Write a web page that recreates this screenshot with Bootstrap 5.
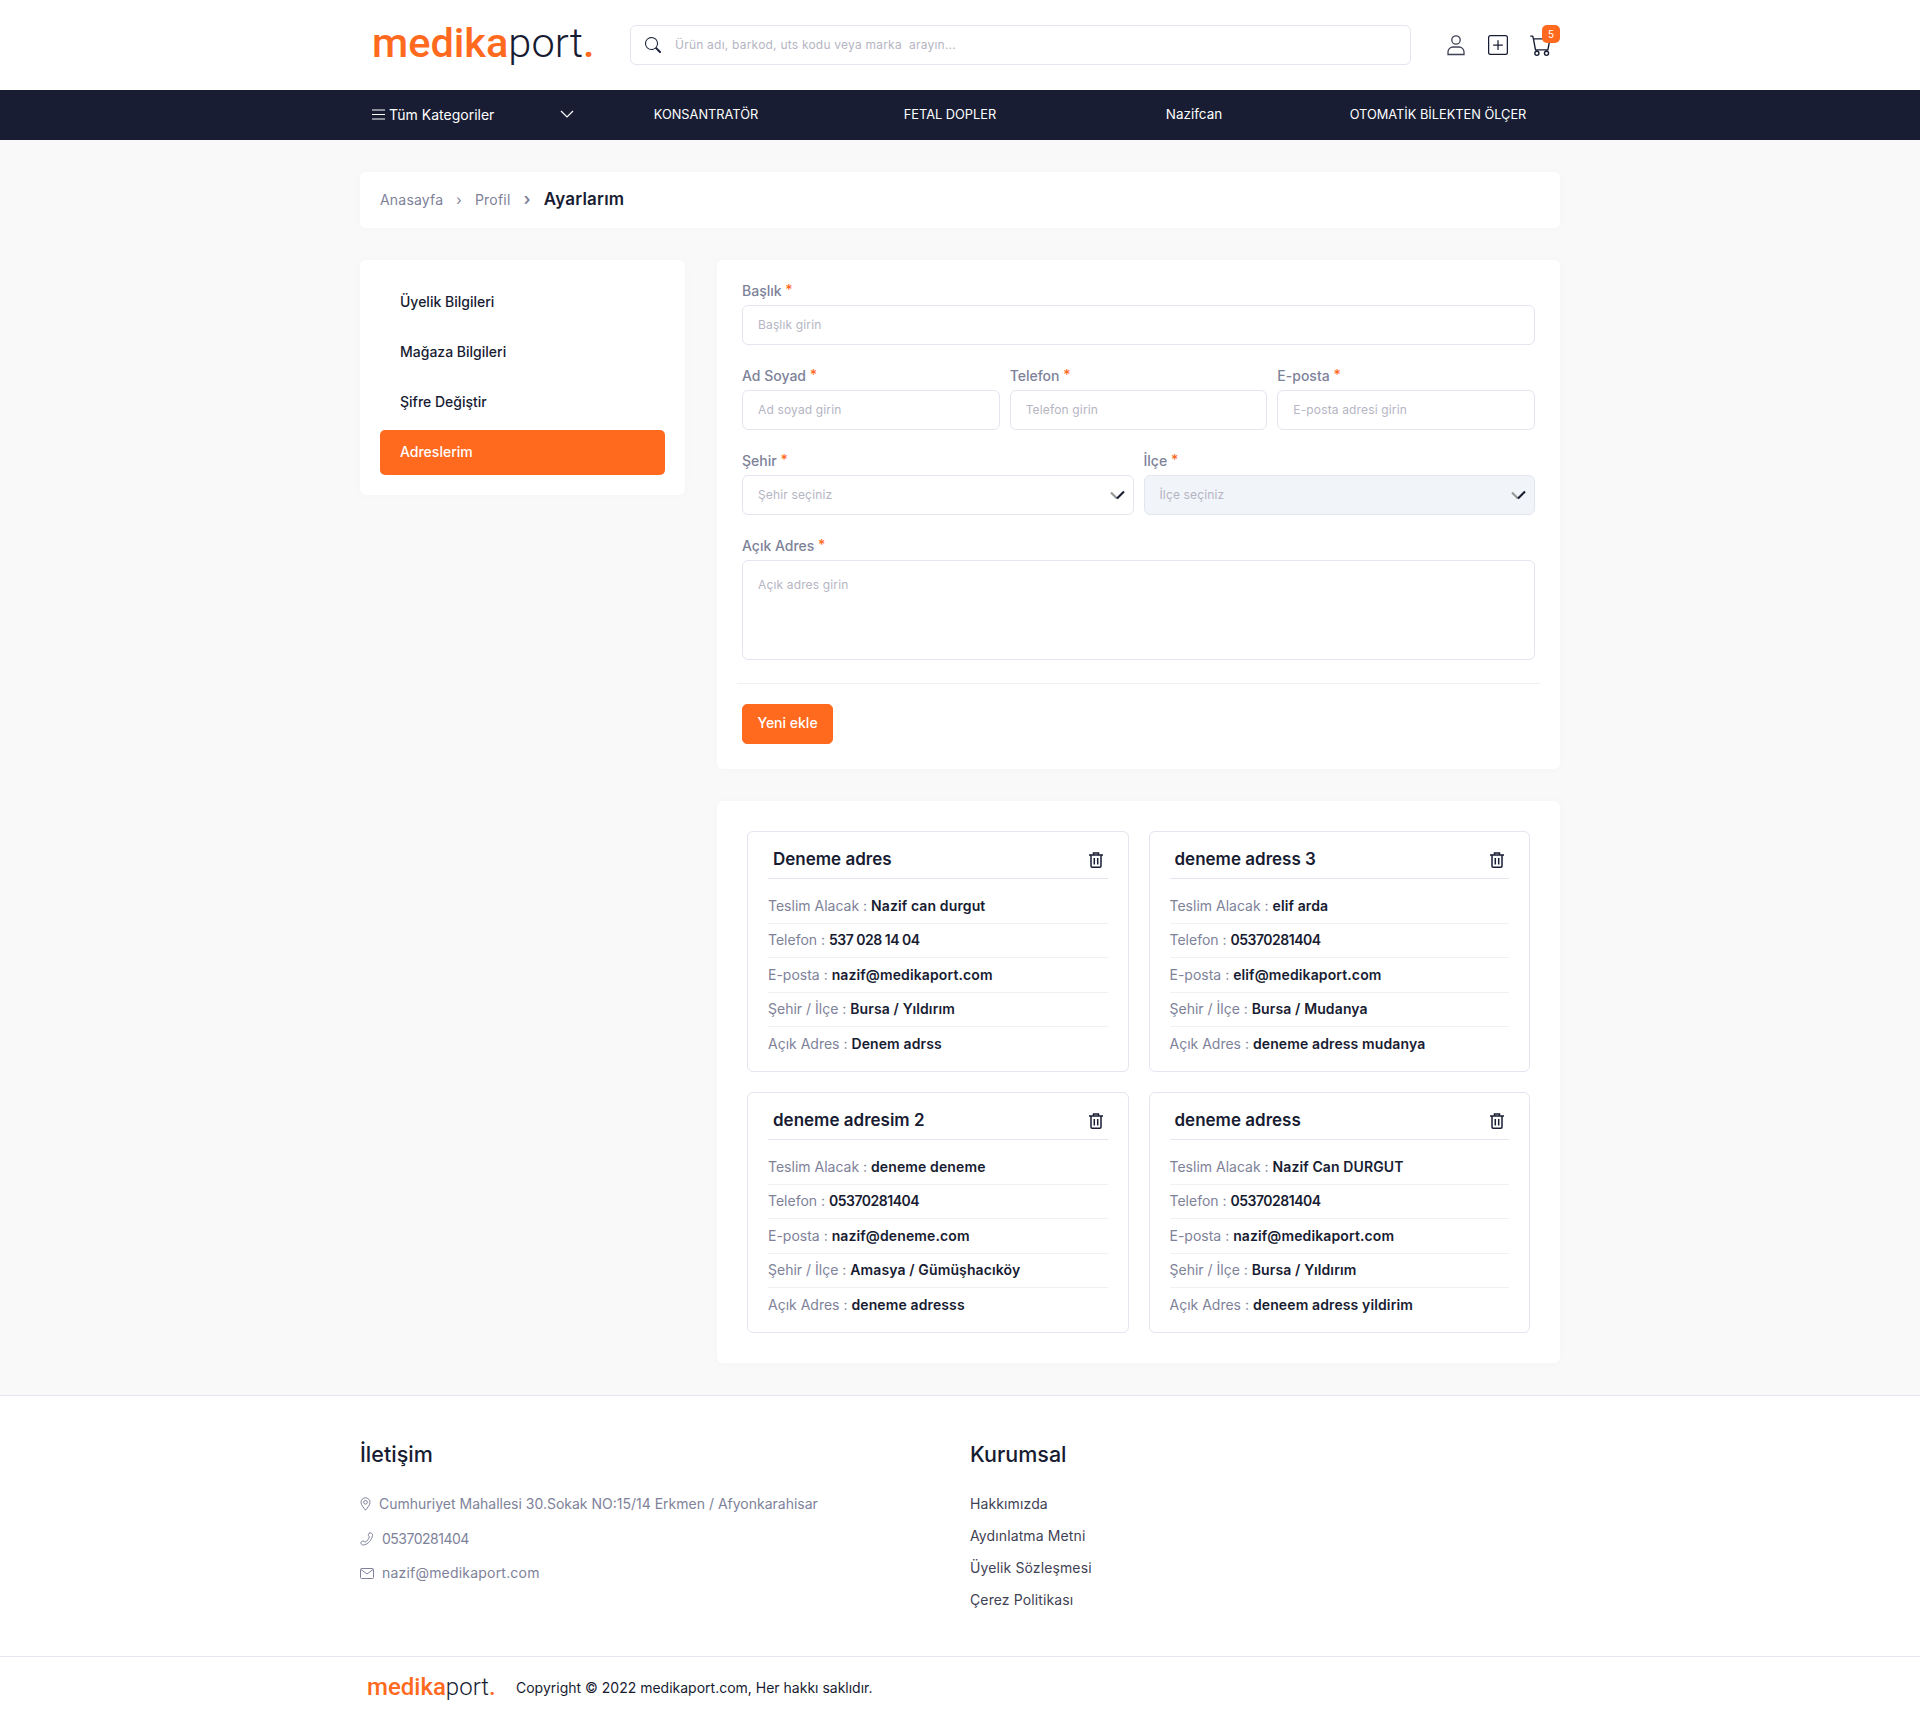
<!DOCTYPE html>
<html lang="tr">
<head>
    <meta charset="UTF-8" />
    <meta name="viewport" content="width=device-width, initial-scale=1.0"/>
    <title>Ayarlarım</title>
    <link href="https://cdn.jsdelivr.net/npm/bootstrap@5.3.1/dist/css/bootstrap.min.css" rel="stylesheet"/>
    <style>
        body { font-family: Inter, "Noto Sans", sans-serif; font-size: 14px; background: #f9f9f9; color: #181c32; }
        a { text-decoration: none; }
        .wrap { width: 1200px; margin: 0 auto; }
        .logo { font-family: Roboto, "Liberation Sans", sans-serif; font-weight: 300; color: #181c32; line-height: 1; }
        .logo b { color: #ff6a1f; font-weight: 500; }
        .logo i { color: #ff6a1f; font-style: normal; font-weight: 500; }
        .logo-big { font-size: 41.500px; margin-left: 12px; width: 258px; padding-bottom: 4px; }
        .logo-small { font-size: 24px; margin-left: 7px; width: 149px; }
        .top-head { height: 90px; background: #fff; }
        .search-box { width: 781px; height: 40px; border: 1px solid #e4e6ef; border-radius: 6px; padding-left: 14px; gap: 12px; }
        .search-box input { border: 0; outline: 0; flex: 1; font-size: 12px; color: #181c32; letter-spacing: .22px; }
        .search-box input::placeholder { color: #b5b5c3; }
        .head-icons { position: relative; margin-left: 35px; gap: 22px; }
        .cart-count { position: absolute; top: -9px; right: -8px; width: 18px; height: 18px; border-radius: 5px; background: #ff6a1f; color: #fff; font-size: 10px; }
        .main-nav { height: 50px; background: #181d33; }
        .main-nav .wrap { padding-bottom: 2px; }
        .main-nav a { color: #fff; font-size: 13.500px; }
        .main-nav a.caps { font-size: 12.800px; }
        .cat-drop { width: 224px; padding: 0 10px 0 12px; color: #fff; font-size: 14px; }
        .nav-cell { width: 244px; text-align: center; }
        .white-box { background: #fff; border-radius: 6px; box-shadow: 0 0 10px rgba(0, 0, 0, .025); }
        .crumb-box { height: 56px; margin-top: 32px; margin-bottom: 32px; padding: 0 20px 2px; }
        .crumb-box .breadcrumb { --bs-breadcrumb-divider: '›'; --bs-breadcrumb-item-padding-x: 13px; --bs-breadcrumb-margin-bottom: 0; letter-spacing: .2px; }
        .crumb-box a, .crumb-box .breadcrumb-item::before { color: #7e8299; }
        .crumb-box .breadcrumb-item.active { color: #181c32; font-size: 17px; font-weight: 600; line-height: 21px; }
        .side-col { width: 325px; flex: none; }
        .main-col { width: 843px; flex: none; margin-left: 32px; }
        .side-box { padding: 20px; }
        .side-link { display: flex; align-items: center; height: 45px; padding: 0 0 2px 20px; margin-bottom: 5px; border-radius: 5px; color: #181c32; font-weight: 500; }
        .side-link:last-child { margin-bottom: 0; }
        .side-link.on { background: #ff6a1f; color: #fff; }
        .form-box { padding: 20px 25px 25px; margin-bottom: 32px; }
        .fld-row { --bs-gutter-x: 10px; }
        .fld { margin-bottom: 20px; }
        .fld label { display: block; height: 25px; line-height: 20px; color: #7e8299; font-weight: 500; font-size: 14px; }
        .fld label span { color: #ff6a1f; vertical-align: 1px; }
        .fld .form-control, .fld .form-select { height: 40px; border-color: #e4e6ef; border-radius: 6px; font-size: 12px; padding: 0 15px 2px; box-shadow: none; letter-spacing: .15px; }
        .fld .form-control::placeholder { color: #b5b5c3; }
        .fld .form-select { padding-bottom: 0; color: #b5b5c3; background-position: right 6px center; background-size: 18px 18px; background-image: url("data:image/svg+xml,%3csvg xmlns='http://www.w3.org/2000/svg' viewBox='0 0 18 18'%3e%3cpath fill='none' stroke='%23999' stroke-width='2.2' d='M2 6.500l6 6'/%3e%3cpath fill='none' stroke='%23181d33' stroke-width='2.2' d='M8 12.500l7-7'/%3e%3c/svg%3e"); }
        .fld .form-select:disabled { background-color: #f1f4f8; }
        .fld textarea.form-control { height: 100px; padding-top: 15px; resize: none; }
        .form-line { margin: 23px -5px 20px; border-top: 1px solid #f1f1f4; height: 0; }
        .fld-last { margin-bottom: 0; }
        .add-btn { --bs-btn-bg: #ff6a1f; --bs-btn-border-color: #ff6a1f; --bs-btn-hover-bg: #f05c12; --bs-btn-hover-border-color: #f05c12; --bs-btn-color: #fff; --bs-btn-hover-color: #fff; display: block; width: 91px; height: 40px; padding: 0 0 3px; font-size: 14px; font-weight: 500; border-radius: 5px; }
        .addr-box { padding: 30px; }
        .addr-grid { display: grid; grid-template-columns: 1fr 1fr; gap: 20px; }
        .addr-item { height: 241px; padding: 0 20px; border: 1px solid #e4e6ef; border-radius: 6px; }
        .addr-head { height: 47px; padding: 15px 5px 0 5px; border-bottom: 1px solid #e4e6ef; }
        .addr-head h6 { font-size: 17px; font-weight: 600; line-height: 24px; margin: 0; color: #181c32; }
        .addr-head svg { margin-top: 5px; }
        .addr-rows { margin: 10px 0 0; padding: 0; list-style: none; }
        .addr-rows li { padding: 5.750px 0 6.750px; line-height: 21px; border-bottom: 1px solid #f1f1f4; color: #7e8299; }
        .addr-rows li:last-child { border-bottom: 0; }
        .addr-rows b { font-weight: 600; color: #181c32; letter-spacing: .12px; }
        .addr-rows b.tel-val, .tel-val { letter-spacing: -.5px; }
        .site-foot { margin-top: 32px; background: #fff; border-top: 1px solid #e4e6ef; }
        .foot-main { height: 260px; padding-top: 43px; }
        .foot-col { width: 610px; flex: none; }
        .foot-col h5 { font-size: 21.500px; font-weight: 500; line-height: 30px; margin-bottom: 19px; color: #181c32; }
        .foot-infos { margin-top: -1px; }
        .foot-info { color: #7e8299; height: 34.500px; line-height: 32px; }
        .mail-val { letter-spacing: .2px; }
        .foot-link { display: block; height: 32px; line-height: 32px; color: #3f4254; letter-spacing: .12px; }
        .foot-copy { height: 61px; border-top: 1px solid #e4e6ef; }
        .copy-text { color: #181c32; }
    </style>
</head>
<body>

<header class="top-head d-flex align-items-center">
    <div class="wrap d-flex align-items-center">
        <a href="#" class="logo logo-big"><b>medika</b>port<i>.</i></a>
        <div class="search-box d-flex align-items-center">
            <svg width="16" height="16" viewBox="0 0 16 16" fill="#181d33"><path d="M11.742 10.344a6.5 6.5 0 1 0-1.397 1.398h-.001c.03.04.062.078.098.115l3.85 3.85a1 1 0 0 0 1.415-1.414l-3.85-3.85a1.007 1.007 0 0 0-.115-.1zM12 6.5a5.5 5.5 0 1 1-11 0 5.5 5.5 0 0 1 11 0z"/></svg>
            <input type="text" placeholder="Ürün adı, barkod, uts kodu veya marka  arayın..." />
        </div>
        <div class="head-icons d-flex align-items-center">
            <svg width="20" height="22" viewBox="0 0 20 22" fill="none" stroke="#3f4254" stroke-width="1.3"><circle cx="10" cy="6" r="4.2"/><path d="M2 20.5v-2.5c0-3 2.5-5 5-5h6c2.5 0 5 2 5 5v2.5z"/></svg>
            <svg width="20" height="20" viewBox="0 0 16 16" fill="#181d33"><path d="M14 1a1 1 0 0 1 1 1v12a1 1 0 0 1-1 1H2a1 1 0 0 1-1-1V2a1 1 0 0 1 1-1h12zM2 0a2 2 0 0 0-2 2v12a2 2 0 0 0 2 2h12a2 2 0 0 0 2-2V2a2 2 0 0 0-2-2H2z"/><path d="M8 4a.5.5 0 0 1 .5.5v3h3a.5.5 0 0 1 0 1h-3v3a.5.5 0 0 1-1 0v-3h-3a.5.5 0 0 1 0-1h3v-3A.5.5 0 0 1 8 4z"/></svg>
            <svg width="22" height="22" viewBox="0 0 16 16" fill="#181d33"><path d="M0 1.5A.5.5 0 0 1 .5 1H2a.5.5 0 0 1 .485.379L2.89 3H14.5a.5.5 0 0 1 .491.592l-1.5 8A.5.5 0 0 1 13 12H4a.5.5 0 0 1-.491-.408L2.01 3.607 1.61 2H.5a.5.5 0 0 1-.5-.5zM3.102 4l1.313 7h8.17l1.313-7H3.102zM5 12a2 2 0 1 0 0 4 2 2 0 0 0 0-4zm7 0a2 2 0 1 0 0 4 2 2 0 0 0 0-4zm-7 1a1 1 0 1 1 0 2 1 1 0 0 1 0-2zm7 0a1 1 0 1 1 0 2 1 1 0 0 1 0-2z"/></svg>
            <span class="cart-count d-flex align-items-center justify-content-center">5</span>
        </div>
    </div>
</header>

<nav class="main-nav d-flex align-items-center">
    <div class="wrap d-flex align-items-center">
        <div class="cat-drop d-flex align-items-center justify-content-between">
            <span class="d-flex align-items-center gap-1">
                <svg width="13" height="11" viewBox="0 0 13 11" stroke="#fff" stroke-width="1"><path d="M0 1h13M0 5.500h13M0 10h13"/></svg>
                Tüm Kategoriler
            </span>
            <svg width="14" height="8" viewBox="0 0 14 8" fill="none" stroke="#fff" stroke-width="1.200"><path d="M1 1l6 6 6-6"/></svg>
        </div>
        <div class="nav-cell"><a href="#" class="caps">KONSANTRATÖR</a></div>
        <div class="nav-cell"><a href="#" class="caps">FETAL DOPLER</a></div>
        <div class="nav-cell"><a href="#">Nazifcan</a></div>
        <div class="nav-cell"><a href="#" class="caps">OTOMATİK BİLEKTEN ÖLÇER</a></div>
    </div>
</nav>

<div class="wrap">
    <div class="white-box crumb-box d-flex align-items-center">
        <ol class="breadcrumb align-items-center">
            <li class="breadcrumb-item"><a href="#">Anasayfa</a></li>
            <li class="breadcrumb-item"><a href="#">Profil</a></li>
            <li class="breadcrumb-item active">Ayarlarım</li>
        </ol>
    </div>

    <div class="d-flex align-items-start">
        <div class="side-col white-box side-box">
            <a href="#" class="side-link">Üyelik Bilgileri</a>
            <a href="#" class="side-link">Mağaza Bilgileri</a>
            <a href="#" class="side-link">Şifre Değiştir</a>
            <a href="#" class="side-link on">Adreslerim</a>
        </div>

        <div class="main-col">
            <form class="white-box form-box">
                <div class="fld">
                    <label>Başlık <span>*</span></label>
                    <input type="text" class="form-control" placeholder="Başlık girin" />
                </div>
                <div class="row fld-row">
                    <div class="col-4 fld">
                        <label>Ad Soyad <span>*</span></label>
                        <input type="text" class="form-control" placeholder="Ad soyad girin" />
                    </div>
                    <div class="col-4 fld">
                        <label>Telefon <span>*</span></label>
                        <input type="text" class="form-control" placeholder="Telefon girin" />
                    </div>
                    <div class="col-4 fld">
                        <label>E-posta <span>*</span></label>
                        <input type="text" class="form-control" placeholder="E-posta adresi girin" />
                    </div>
                </div>
                <div class="row fld-row">
                    <div class="col-6 fld">
                        <label>Şehir <span>*</span></label>
                        <select class="form-select"><option>Şehir seçiniz</option></select>
                    </div>
                    <div class="col-6 fld">
                        <label>İlçe <span>*</span></label>
                        <select class="form-select" disabled><option>İlçe seçiniz</option></select>
                    </div>
                </div>
                <div class="fld fld-last">
                    <label>Açık Adres <span>*</span></label>
                    <textarea class="form-control" placeholder="Açık adres girin"></textarea>
                </div>
                <div class="form-line"></div>
                <button type="button" class="btn add-btn">Yeni ekle</button>
            </form>

            <div class="white-box addr-box">
                <div class="addr-grid" id="addrGrid"></div>
            </div>
        </div>
    </div>
</div>

<footer class="site-foot">
    <div class="wrap foot-main d-flex">
        <div class="foot-col">
            <h5>İletişim</h5>
            <div class="foot-infos">
                <div class="foot-info d-flex align-items-center gap-2">
                    <svg width="11" height="14" viewBox="0 0 11 14" fill="none" stroke="#7e8299"><path d="M5.500 13.200C3.500 10.500 1 8 1 5.300a4.500 4.500 0 0 1 9 0c0 2.700-2.500 5.200-4.500 7.900z"/><circle cx="5.500" cy="5.300" r="1.800"/></svg>
                    Cumhuriyet Mahallesi 30.Sokak NO:15/14 Erkmen / Afyonkarahisar
                </div>
                <div class="foot-info d-flex align-items-center gap-2">
                    <svg width="14" height="14" viewBox="0 0 14 14" fill="none" stroke="#7e8299"><path d="M9.500 1c1.500-.5 3.500.8 3 2.500C11.800 7.800 8 12.500 3.500 13c-1.800.2-3-1.300-2.500-2.800.5-1 2-1.500 3-1 .5.300.5 1 1 1 2-.8 4-3.500 4.300-5.400 0-.7-1-.8-1-1.500.1-1 .5-2.300 1.700-2.300z"/></svg>
                    <span class="tel-val">05370281404</span>
                </div>
                <div class="foot-info d-flex align-items-center gap-2">
                    <svg width="14" height="11" viewBox="0 0 14 11" fill="none" stroke="#7e8299"><rect x=".5" y=".5" width="13" height="10" rx="1"/><path d="M1 1.500l6 4.500 6-4.500"/></svg>
                    <span class="mail-val">nazif@medikaport.com</span>
                </div>
            </div>
        </div>
        <div class="foot-col">
            <h5>Kurumsal</h5>
            <a href="#" class="foot-link">Hakkımızda</a>
            <a href="#" class="foot-link">Aydınlatma Metni</a>
            <a href="#" class="foot-link">Üyelik Sözleşmesi</a>
            <a href="#" class="foot-link">Çerez Politikası</a>
        </div>
    </div>
    <div class="foot-copy d-flex align-items-center">
        <div class="wrap d-flex align-items-center">
            <a href="#" class="logo logo-small"><b>medika</b>port<i>.</i></a>
            <span class="copy-text">Copyright © 2022 medikaport.com, Her hakkı saklıdır.</span>
        </div>
    </div>
</footer>

<script>
    const adresler = [
        ["Deneme adres", "Nazif can durgut", "537 028 14 04", "nazif@medikaport.com", "Bursa / Yıldırım", "Denem adrss"],
        ["deneme adress 3", "elif arda", "05370281404", "elif@medikaport.com", "Bursa / Mudanya", "deneme adress mudanya"],
        ["deneme adresim 2", "deneme deneme", "05370281404", "nazif@deneme.com", "Amasya / Gümüşhacıköy", "deneme adresss"],
        ["deneme adress", "Nazif Can DURGUT", "05370281404", "nazif@medikaport.com", "Bursa / Yıldırım", "deneem adress yildirim"]
    ];
    const trash = '<svg width="14" height="16" viewBox="0 0 14 16" fill="none" stroke="#181d33" stroke-width="1.500"><path d="M0 3h14M4.500 3V1h5v2M2 3v11a1.200 1.200 0 0 0 1.200 1.200h7.600A1.200 1.200 0 0 0 12 14V3M5.300 6v6.500M8.700 6v6.500"/></svg>';
    document.getElementById("addrGrid").innerHTML = adresler.map(a => `
        <div class="addr-item">
            <div class="addr-head d-flex justify-content-between align-items-start">
                <h6>${a[0]}</h6>${trash}
            </div>
            <ul class="addr-rows">
                <li>Teslim Alacak : <b>${a[1]}</b></li>
                <li>Telefon : <b class="tel-val">${a[2]}</b></li>
                <li>E-posta : <b>${a[3]}</b></li>
                <li>Şehir / İlçe : <b>${a[4]}</b></li>
                <li>Açık Adres : <b>${a[5]}</b></li>
            </ul>
        </div>`).join("");
</script>
<script src="https://cdn.jsdelivr.net/npm/bootstrap@5.3.1/dist/js/bootstrap.bundle.min.js"></script>
</body>
</html>
